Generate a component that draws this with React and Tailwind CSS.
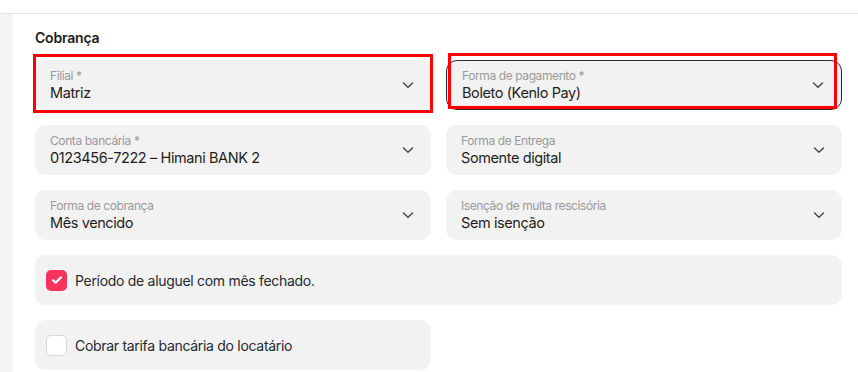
import React from "react";

const Chevron = () => (
  <svg width="12" height="8" viewBox="0 0 12 8" fill="none" className="shrink-0">
    <path d="M1.5 2l4.5 4.2L10.5 2" stroke="#4a4a4a" strokeWidth="1.5" strokeLinecap="round" strokeLinejoin="round" />
  </svg>
);

const Field = ({ label, value, focused }) => (
  <div
    className={`h-[50px] rounded-[11px] bg-[#f2f2f2] flex items-center pl-[15px] pr-[17px] ${
      focused ? "border border-[#2a2a2a] pl-[14px] pr-[16px]" : ""
    }`}
  >
    <div className="flex-1 flex flex-col">
      <span className="text-[12px] leading-[15px] text-[#9a9a9a] tracking-[-0.4px]">{label}</span>
      <span className="text-[14.5px] leading-[20px] text-[#1e1e1e] tracking-[-0.4px]">{value}</span>
    </div>
    <Chevron />
  </div>
);

const CheckRow = ({ checked, label, className = "" }) => (
  <div className={`h-[50px] rounded-[11px] bg-[#f2f2f2] flex items-center pl-[11px] gap-[8px] ${className}`}>
    {checked ? (
      <div className="w-[21px] h-[21px] rounded-[5px] bg-[#f7325c] flex items-center justify-center">
        <svg width="12" height="10" viewBox="0 0 12 10" fill="none">
          <path d="M2 5.2l2.6 2.4L10 2.4" stroke="white" strokeWidth="2.2" strokeLinecap="round" strokeLinejoin="round" />
        </svg>
      </div>
    ) : (
      <div className="w-[21px] h-[21px] rounded-[5px] bg-white border border-[#d9d9d9]" />
    )}
    <span className="text-[14px] text-[#262933] tracking-[-0.3px]">{label}</span>
  </div>
);

export default function App() {
  return (
    <div
      className="relative w-[858px] h-[372px] bg-white overflow-hidden"
      style={{ fontFamily: "Inter, 'Noto Sans', sans-serif" }}
    >
      <div className="h-[13px] border-b border-[#e2e2e2] box-content" />
      <div className="flex h-full">
        <div className="w-[13px] bg-[#f4f4f4] shrink-0" />
        <div className="flex-1 pl-[22px] pr-[16px] pt-[14px]">
          <div className="text-[14px] leading-[20px] font-semibold text-[#1c1c1c] mb-[12px] tracking-[-0.2px]">Cobrança</div>
          <div className="grid grid-cols-2 gap-x-[15px] gap-y-[15px]">
            <Field label="Filial *" value="Matriz" />
            <Field label="Forma de pagamento *" value="Boleto (Kenlo Pay)" focused />
            <Field label="Conta bancária *" value="0123456-7222 – Himani BANK 2" />
            <Field label="Forma de Entrega" value="Somente digital" />
            <Field label="Forma de cobrança" value="Mês vencido" />
            <Field label="Isenção de multa rescisória" value="Sem isenção" />
            <CheckRow checked label="Período de aluguel com mês fechado." className="col-span-2" />
            <CheckRow label="Cobrar tarifa bancária do locatário" />
          </div>
        </div>
      </div>
      <div className="absolute left-[33px] top-[54px] w-[400px] h-[59px] border-[3px] border-[#ff0000] pointer-events-none" />
      <div className="absolute left-[448px] top-[53px] w-[389px] h-[56px] border-[3px] border-[#ff0000] pointer-events-none" />
    </div>
  );
}
